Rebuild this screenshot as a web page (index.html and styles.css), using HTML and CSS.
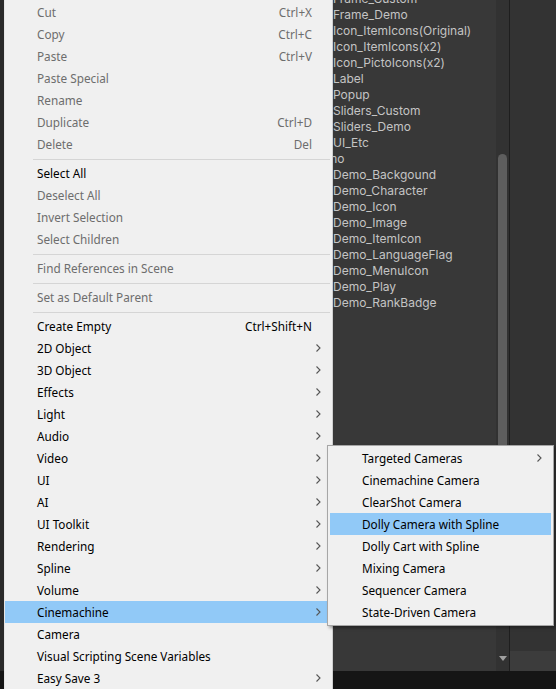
FILE: index.html
```html
<!DOCTYPE html>
<html>
<head>
<meta charset="utf-8">
<link rel="stylesheet" href="styles.css">
</head>
<body>
<div class="editor">
  <div class="workspace">
    <div class="edge"></div>
    <div class="hierarchy">
      <ul class="tree">
        <li>Frame_Custom</li>
        <li>Frame_Demo</li>
        <li>Icon_ItemIcons(Original)</li>
        <li>Icon_ItemIcons(x2)</li>
        <li>Icon_PictoIcons(x2)</li>
        <li>Label</li>
        <li>Popup</li>
        <li>Sliders_Custom</li>
        <li>Sliders_Demo</li>
        <li>UI_Etc</li>
        <li class="parent">Demo</li>
        <li>Demo_Backgound</li>
        <li>Demo_Character</li>
        <li>Demo_Icon</li>
        <li>Demo_Image</li>
        <li>Demo_ItemIcon</li>
        <li>Demo_LanguageFlag</li>
        <li>Demo_MenuIcon</li>
        <li>Demo_Play</li>
        <li>Demo_RankBadge</li>
      </ul>
      <div class="scrollbar">
        <div class="thumb"></div>
        <div class="scroll-down"><svg width="8" height="5" viewBox="0 0 8 5"><polygon points="0,0 8,0 4,5" fill="#a0a0a0"/></svg></div>
      </div>
    </div>
    <div class="divider"></div>
    <div class="side">
      <div class="side-fill"></div>
      <div class="side-bar"></div>
    </div>
  </div>
  <div class="statusbar"></div>
</div>

<div class="menu main-menu">
  <div class="item disabled"><span class="label">Cut</span><span class="key">Ctrl+X</span></div>
  <div class="item disabled"><span class="label">Copy</span><span class="key">Ctrl+C</span></div>
  <div class="item disabled"><span class="label">Paste</span><span class="key">Ctrl+V</span></div>
  <div class="item disabled"><span class="label">Paste Special</span></div>
  <div class="item disabled"><span class="label">Rename</span></div>
  <div class="item disabled"><span class="label">Duplicate</span><span class="key">Ctrl+D</span></div>
  <div class="item disabled"><span class="label">Delete</span><span class="key">Del</span></div>
  <div class="sep"></div>
  <div class="item"><span class="label">Select All</span></div>
  <div class="item disabled"><span class="label">Deselect All</span></div>
  <div class="item disabled"><span class="label">Invert Selection</span></div>
  <div class="item disabled"><span class="label">Select Children</span></div>
  <div class="sep"></div>
  <div class="item disabled"><span class="label">Find References in Scene</span></div>
  <div class="sep"></div>
  <div class="item disabled"><span class="label">Set as Default Parent</span></div>
  <div class="sep"></div>
  <div class="item"><span class="label">Create Empty</span><span class="key">Ctrl+Shift+N</span></div>
  <div class="item"><span class="label">2D Object</span><svg class="chev" width="5" height="8" viewBox="0 0 5 8"><polyline points="0.5,0.5 4,4 0.5,7.5" fill="none" stroke="#555" stroke-width="1.1"/></svg></div>
  <div class="item"><span class="label">3D Object</span><svg class="chev" width="5" height="8" viewBox="0 0 5 8"><polyline points="0.5,0.5 4,4 0.5,7.5" fill="none" stroke="#555" stroke-width="1.1"/></svg></div>
  <div class="item"><span class="label">Effects</span><svg class="chev" width="5" height="8" viewBox="0 0 5 8"><polyline points="0.5,0.5 4,4 0.5,7.5" fill="none" stroke="#555" stroke-width="1.1"/></svg></div>
  <div class="item"><span class="label">Light</span><svg class="chev" width="5" height="8" viewBox="0 0 5 8"><polyline points="0.5,0.5 4,4 0.5,7.5" fill="none" stroke="#555" stroke-width="1.1"/></svg></div>
  <div class="item"><span class="label">Audio</span><svg class="chev" width="5" height="8" viewBox="0 0 5 8"><polyline points="0.5,0.5 4,4 0.5,7.5" fill="none" stroke="#555" stroke-width="1.1"/></svg></div>
  <div class="item"><span class="label">Video</span><svg class="chev" width="5" height="8" viewBox="0 0 5 8"><polyline points="0.5,0.5 4,4 0.5,7.5" fill="none" stroke="#555" stroke-width="1.1"/></svg></div>
  <div class="item"><span class="label">UI</span><svg class="chev" width="5" height="8" viewBox="0 0 5 8"><polyline points="0.5,0.5 4,4 0.5,7.5" fill="none" stroke="#555" stroke-width="1.1"/></svg></div>
  <div class="item"><span class="label">AI</span><svg class="chev" width="5" height="8" viewBox="0 0 5 8"><polyline points="0.5,0.5 4,4 0.5,7.5" fill="none" stroke="#555" stroke-width="1.1"/></svg></div>
  <div class="item"><span class="label">UI Toolkit</span><svg class="chev" width="5" height="8" viewBox="0 0 5 8"><polyline points="0.5,0.5 4,4 0.5,7.5" fill="none" stroke="#555" stroke-width="1.1"/></svg></div>
  <div class="item"><span class="label">Rendering</span><svg class="chev" width="5" height="8" viewBox="0 0 5 8"><polyline points="0.5,0.5 4,4 0.5,7.5" fill="none" stroke="#555" stroke-width="1.1"/></svg></div>
  <div class="item"><span class="label">Spline</span><svg class="chev" width="5" height="8" viewBox="0 0 5 8"><polyline points="0.5,0.5 4,4 0.5,7.5" fill="none" stroke="#555" stroke-width="1.1"/></svg></div>
  <div class="item"><span class="label">Volume</span><svg class="chev" width="5" height="8" viewBox="0 0 5 8"><polyline points="0.5,0.5 4,4 0.5,7.5" fill="none" stroke="#555" stroke-width="1.1"/></svg></div>
  <div class="item active"><span class="label">Cinemachine</span><svg class="chev" width="5" height="8" viewBox="0 0 5 8"><polyline points="0.5,0.5 4,4 0.5,7.5" fill="none" stroke="#555" stroke-width="1.1"/></svg></div>
  <div class="item"><span class="label">Camera</span></div>
  <div class="item"><span class="label">Visual Scripting Scene Variables</span></div>
  <div class="item"><span class="label">Easy Save 3</span><svg class="chev" width="5" height="8" viewBox="0 0 5 8"><polyline points="0.5,0.5 4,4 0.5,7.5" fill="none" stroke="#555" stroke-width="1.1"/></svg></div>
</div>

<div class="menu submenu">
  <div class="item"><span class="label">Targeted Cameras</span><svg class="chev" width="5" height="8" viewBox="0 0 5 8"><polyline points="0.5,0.5 4,4 0.5,7.5" fill="none" stroke="#555" stroke-width="1.1"/></svg></div>
  <div class="item"><span class="label">Cinemachine Camera</span></div>
  <div class="item"><span class="label">ClearShot Camera</span></div>
  <div class="item active"><span class="label">Dolly Camera with Spline</span></div>
  <div class="item"><span class="label">Dolly Cart with Spline</span></div>
  <div class="item"><span class="label">Mixing Camera</span></div>
  <div class="item"><span class="label">Sequencer Camera</span></div>
  <div class="item"><span class="label">State-Driven Camera</span></div>
</div>
</body>
</html>
```
FILE: styles.css
```css
html, body {
  margin: 0;
  padding: 0;
}
body {
  width: 556px;
  height: 689px;
  overflow: hidden;
  position: relative;
  background: #383838;
}
.editor {
  display: flex;
  flex-direction: column;
  height: 689px;
}
.workspace {
  display: flex;
  height: 671px;
}
.edge {
  width: 4px;
  background: #2a2a2a;
}
.hierarchy {
  width: 505px;
  display: flex;
  background: #383838;
  overflow: hidden;
}
.tree {
  flex: 1;
  list-style: none;
  margin: -9px 0 0 0;
  padding: 0 0 0 329px;
  font-family: Inter, "Liberation Sans", sans-serif;
  font-size: 12px;
  color: #c4c4c4;
}
.tree li {
  height: 16px;
  line-height: 16px;
  white-space: nowrap;
}
.tree li.parent {
  margin-left: -22px;
}
.scrollbar {
  width: 13px;
  background: #323232;
  display: flex;
  flex-direction: column;
  align-items: center;
}
.thumb {
  margin-top: 154px;
  width: 9px;
  height: 456px;
  background: #5e5e5e;
  border-radius: 5px 5px 0 0;
}
.scroll-down {
  margin-top: auto;
  height: 15px;
  display: flex;
  align-items: flex-start;
  justify-content: center;
}
.divider {
  width: 1px;
  background: #1e1e1e;
}
.side {
  flex: 1;
  display: flex;
  flex-direction: column;
}
.side-fill {
  flex: 1;
  background: #333333;
}
.side-bar {
  height: 20px;
  background: #3c3c3c;
}
.statusbar {
  height: 18px;
  background: #151515;
}

.menu {
  position: absolute;
  box-sizing: border-box;
  background: #f0f0f0;
  font-family: "Noto Sans", "Open Sans", sans-serif;
  font-size: 11.75px;
  color: #000;
}
.main-menu {
  left: 4px;
  top: 0;
  width: 329px;
  height: 700px;
  padding-top: 1px;
  border-right: 1px solid #cfcfcf;
  border-left: 1px solid #e6e6e6;
}
.submenu {
  left: 327px;
  top: 445px;
  width: 227px;
  padding: 1px 0 2px 0;
  border: 1px solid #a6a6a6;
  box-shadow: 2px 2px 3px rgba(0, 0, 0, 0.35);
}
.item {
  display: flex;
  align-items: center;
  height: 22px;
  margin-right: 2px;
  padding: 0 9px 0 32px;
  white-space: nowrap;
}
.submenu .item {
  margin: 0 2px;
}
.item .label {
  flex: 1;
}
.item .key {
  margin-right: 9px;
}
.item.disabled {
  color: #6d6d6d;
}
.item.active {
  background: #91c9f7;
}
.chev {
  display: block;
}
.sep {
  height: 1px;
  margin: 4px 2px 2px 28px;
  background: #d5d5d5;
}
```
